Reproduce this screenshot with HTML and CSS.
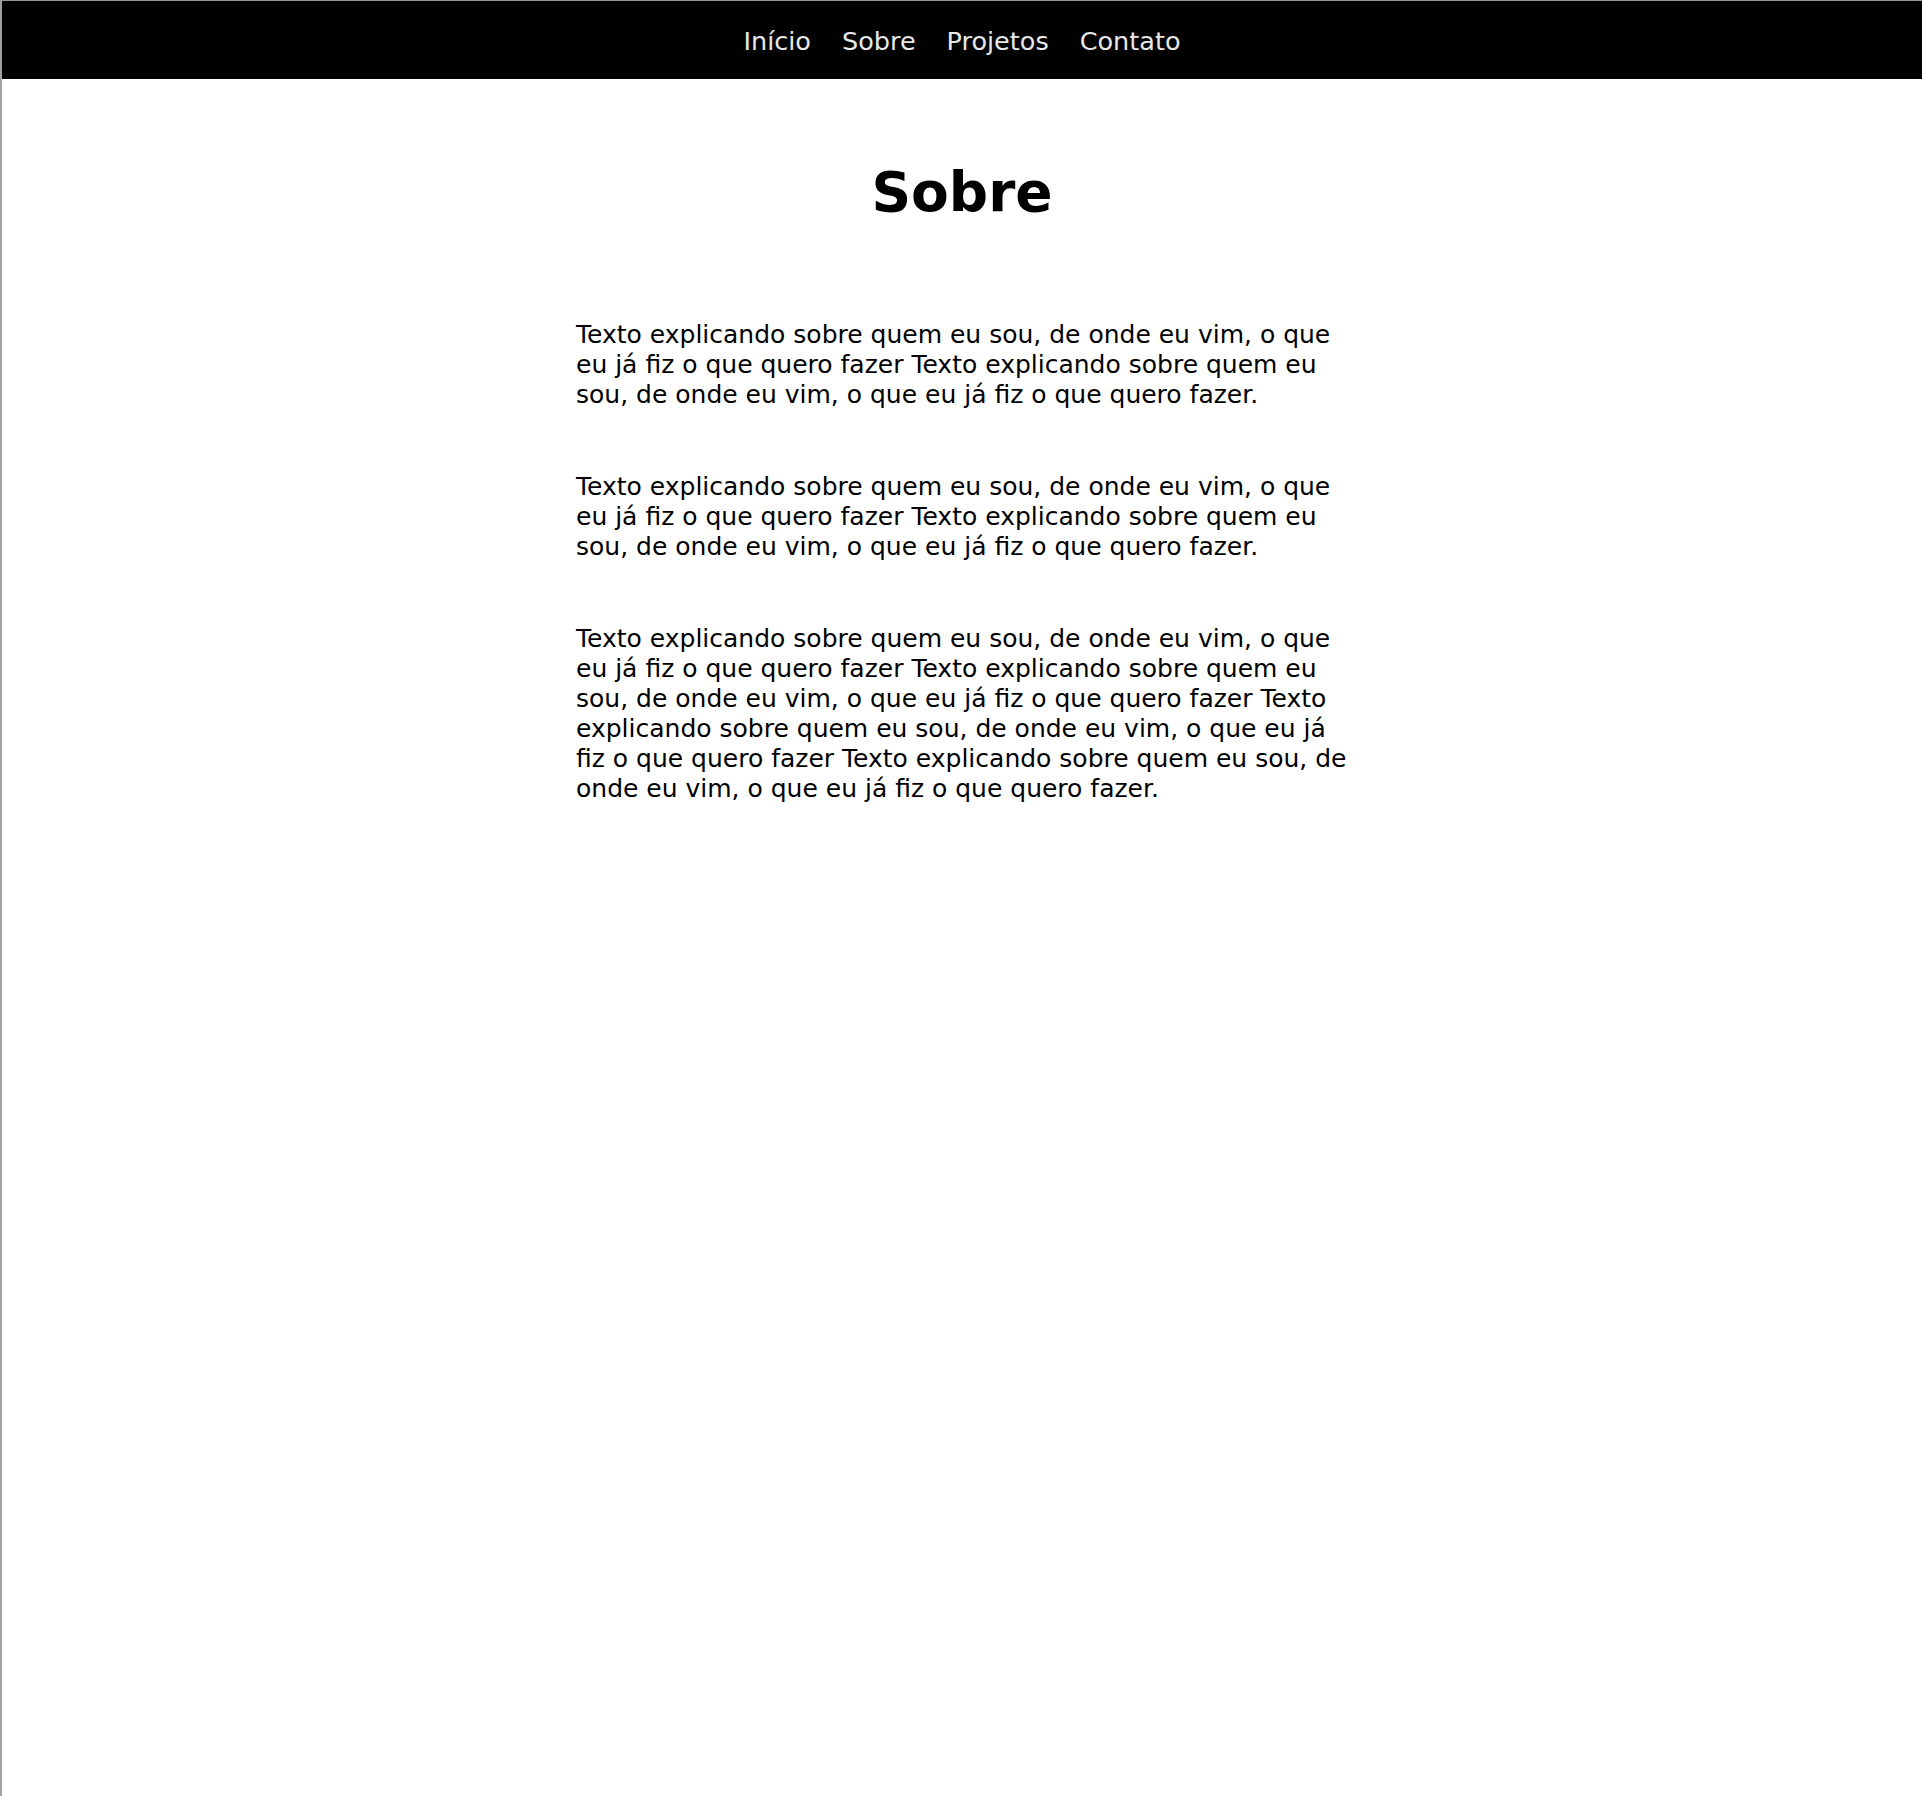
FILE: index.html
```html
<!DOCTYPE html>
<html lang="pt-BR">
<head>
<meta charset="utf-8">
<title>Sobre</title>
<link rel="stylesheet" href="styles.css">
</head>
<body>
<div class="page">
  <nav class="topnav">
    <a href="#" class="navlink">Início</a>
    <a href="#" class="navlink">Sobre</a>
    <a href="#" class="navlink">Projetos</a>
    <a href="#" class="navlink">Contato</a>
  </nav>
  <main class="content">
    <h1 class="title">Sobre</h1>
    <p class="text">Texto explicando sobre quem eu sou, de onde eu vim, o que eu já fiz o que quero fazer Texto explicando sobre quem eu sou, de onde eu vim, o que eu já fiz o que quero fazer.</p>
    <p class="text">Texto explicando sobre quem eu sou, de onde eu vim, o que eu já fiz o que quero fazer Texto explicando sobre quem eu sou, de onde eu vim, o que eu já fiz o que quero fazer.</p>
    <p class="text">Texto explicando sobre quem eu sou, de onde eu vim, o que eu já fiz o que quero fazer Texto explicando sobre quem eu sou, de onde eu vim, o que eu já fiz o que quero fazer Texto explicando sobre quem eu sou, de onde eu vim, o que eu já fiz o que quero fazer Texto explicando sobre quem eu sou, de onde eu vim, o que eu já fiz o que quero fazer.</p>
  </main>
</div>
</body>
</html>
```

FILE: styles.css
```css
html, body {
  margin: 0;
  padding: 0;
  background: #ffffff;
}

.page {
  min-height: 1795px;
  border-top: 1px solid #9a9a9a;
  border-left: 2px solid #a0a0a0;
  font-family: "DejaVu Sans", Verdana, sans-serif;
  color: #000;
}

.topnav {
  height: 78px;
  background: #000;
  display: flex;
  justify-content: center;
  align-items: center;
  gap: 31px;
  padding-top: 2px;
  box-sizing: border-box;
}

.navlink {
  color: #e8e8e8;
  text-decoration: none;
  font-size: 25.5px;
}

.content {
  width: 772px;
  margin: 0 auto;
}

.title {
  font-size: 55px;
  font-weight: bold;
  text-align: center;
  margin: 80px 0 95px;
  line-height: 1.2;
}

.text {
  font-size: 25px;
  line-height: 30px;
  margin: 0 0 62px;
}
```
